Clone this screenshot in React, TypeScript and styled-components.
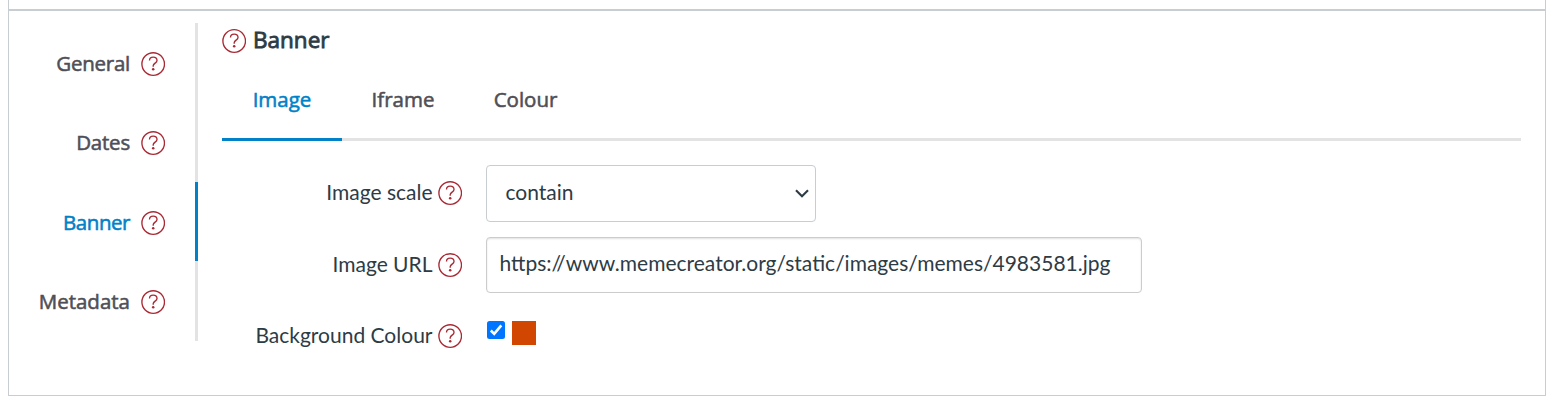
import React from "react";
import styled, { createGlobalStyle } from "styled-components";

const GlobalStyle = createGlobalStyle`
  * { box-sizing: border-box; }
  body { margin: 0; background: #fff; overflow: hidden; }
`;

const heading = `"Segoe UI", "Open Sans", "Noto Sans", sans-serif`;
const bodyFont = `Lato, "Open Sans", sans-serif`;

const Page = styled.div`
  width: 1538px;
  height: 396px;
  margin-left: 8px;
  display: flex;
  flex-direction: column;
  border: 1px solid #c7cdd1;
  border-top: 0;
  color: #2d3b45;
  font-family: ${bodyFont};
`;

const TopStrip = styled.div`
  flex: none;
  height: 11px;
  border-bottom: 2px solid #c7cdd1;
`;

const Body = styled.div`
  display: flex;
  align-items: flex-start;
  padding-top: 12px;
`;

const Sidebar = styled.nav`
  width: 189px;
  height: 318px;
  display: grid;
  grid-template-rows: 79px 80px 79px 80px;
`;

const SideItem = styled.div<{ $active?: boolean }>`
  display: flex;
  align-items: flex-start;
  justify-content: flex-end;
  gap: 11px;
  padding: 29px 30px 0 0;
  border-right: 3px solid ${(p) => (p.$active ? "#0081c8" : "#e3e3e3")};
  color: ${(p) => (p.$active ? "#0081c8" : "#4f4f57")};
`;

const HeadingText = styled.span<{ $size?: number; $stroke?: number; $spacing?: number }>`
  font: 400 ${(p) => p.$size ?? 20.5}px/22px ${heading};
  letter-spacing: ${(p) => p.$spacing ?? 0}px;
  -webkit-text-stroke: ${(p) => p.$stroke ?? 0.55}px currentColor;
  white-space: nowrap;
`;

const Main = styled.main`
  width: 1299px;
  margin-left: 24px;
`;

const Title = styled.div`
  height: 36px;
  display: flex;
  align-items: flex-start;
  gap: 7px;
  padding-top: 6px;
  color: #2d3b45;
`;

const Tabs = styled.div`
  height: 82px;
  display: flex;
  border-bottom: 3px solid #e3e3e3;
`;

const Tab = styled.div<{ $active?: boolean; $width: number }>`
  width: ${(p) => p.$width}px;
  height: 82px;
  padding-top: 29px;
  text-align: center;
  color: ${(p) => (p.$active ? "#0081c8" : "#4f4f57")};
  border-bottom: 3px solid ${(p) => (p.$active ? "#0081c8" : "#e3e3e3")};
`;

const Form = styled.form`
  display: grid;
  grid-template-columns: 240px 656px;
  grid-template-rows: 57px 56px 56px;
  row-gap: 15px;
  column-gap: 24px;
  padding-top: 24px;
`;

const Label = styled.label`
  display: flex;
  align-items: flex-start;
  justify-content: flex-end;
  gap: 5.5px;
  padding-top: 16px;
  font-size: 21px;
  line-height: 22px;
  white-space: nowrap;
`;

const SelectBox = styled.div`
  width: 330px;
  height: 57px;
  display: flex;
  align-items: flex-start;
  justify-content: space-between;
  padding: 14px 5px 0 18.5px;
  border: 1px solid #c7cdd1;
  border-radius: 4px;
  font-size: 21px;
  line-height: 24px;
`;

const TextInput = styled.input`
  width: 656px;
  height: 56px;
  padding: 0 12.5px 5px;
  border: 1px solid #ccc;
  border-radius: 4px;
  outline: 0;
  box-shadow: inset 0 1px 2px rgba(0, 0, 0, 0.12);
  color: #2d3b45;
  font: 21px ${bodyFont};
`;

const ColourField = styled.div`
  display: flex;
  align-items: flex-start;
  gap: 7px;
  padding: 13px 0 0 1px;
`;

const Swatch = styled.div`
  width: 24px;
  height: 24px;
  background: #d14600;
`;

const Icon = styled.svg`
  flex: none;
  display: block;
`;

const ArrowSlot = styled.span`
  padding-top: 5px;
`;

const Help = () => (
  <Icon width="24" height="24" viewBox="0 0 24 24" fill="none" stroke="#a92a35">
    <circle cx="12.2" cy="12" r="11.3" strokeWidth="1.35" />
    <path d="M8.5 8.6C8.5 6.5 10 5.1 12.2 5.1S16 6.5 16 8.4C16 11 12.2 11.2 12.2 13.8V14.7" strokeWidth="1.35" />
    <circle cx="12.2" cy="17.3" r="1.25" fill="#a92a35" stroke="none" />
  </Icon>
);

const Chevron = () => (
  <Icon width="16" height="16" viewBox="0 0 16 16" fill="none" stroke="#2d3b45" strokeWidth="2.1">
    <path d="M2 5.2 8 11.2 14 5.2" />
  </Icon>
);

const Check = () => (
  <Icon width="18" height="18" viewBox="0 0 18 18">
    <rect width="18" height="18" rx="2.5" fill="#0075ff" />
    <path d="M3.8 9.5 7.2 12.9 14.3 4.3" fill="none" stroke="#fff" strokeWidth="2.6" />
  </Icon>
);

const sections = [
  { name: "General", spacing: -0.25 },
  { name: "Dates", spacing: -0.2 },
  { name: "Banner", spacing: -0.45 },
  { name: "Metadata", spacing: 0 },
];
const tabs = [
  { name: "Image", width: 120 },
  { name: "Iframe", width: 122 },
  { name: "Colour", width: 123 },
];

export default function App() {
  return (
    <>
      <GlobalStyle />
      <Page>
        <TopStrip />
        <Body>
          <Sidebar>
            {sections.map((s) => (
              <SideItem key={s.name} $active={s.name === "Banner"}>
                <HeadingText $spacing={s.spacing}>{s.name}</HeadingText>
                <Help />
              </SideItem>
            ))}
          </Sidebar>
          <Main>
            <Title>
              <Help />
              <HeadingText $size={22.5} $stroke={0.85}>Banner</HeadingText>
            </Title>
            <Tabs>
              {tabs.map((t) => (
                <Tab key={t.name} $width={t.width} $active={t.name === "Image"}>
                  <HeadingText>{t.name}</HeadingText>
                </Tab>
              ))}
            </Tabs>
            <Form>
              <Label>Image scale <Help /></Label>
              <SelectBox>contain <ArrowSlot><Chevron /></ArrowSlot></SelectBox>
              <Label>Image URL <Help /></Label>
              <TextInput readOnly value="https://www.memecreator.org/static/images/memes/4983581.jpg" />
              <Label>Background Colour <Help /></Label>
              <ColourField>
                <Check />
                <Swatch />
              </ColourField>
            </Form>
          </Main>
        </Body>
      </Page>
    </>
  );
}
